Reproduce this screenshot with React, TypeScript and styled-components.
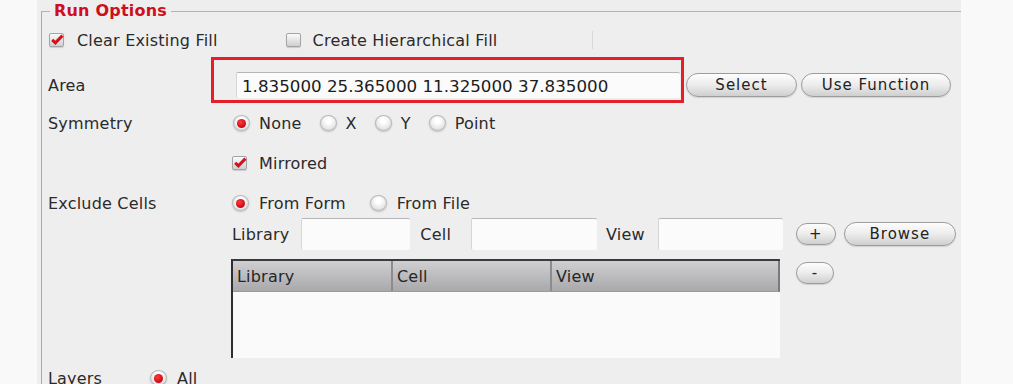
import * as React from "react";
import styled, { createGlobalStyle } from "styled-components";

const GlobalStyle = createGlobalStyle`
  html, body {
    margin: 0;
    padding: 0;
    background: #f9f9f9;
    overflow: hidden;
  }
  body {
    font-family: "DejaVu Sans", "Liberation Sans", sans-serif;
    font-size: 16px;
    letter-spacing: 0.2px;
    color: #2a2a2a;
  }
`;

const Page = styled.div`
  width: 1013px;
  height: 384px;
  overflow: hidden;
`;

const Panel = styled.div`
  margin-left: 37px;
  width: 924px;
  height: 400px;
  padding-top: 1px;
  background: #efeeef;
`;

const Frame = styled.fieldset`
  margin: 0 0 0 4px;
  padding: 0 0 0 6px;
  border: none;
  border-top: 1px solid #b3b2b6;
  border-left: 1px solid #a9a8ab;
  min-width: 0;
`;

const Legend = styled.legend`
  margin-left: 2px;
  padding: 0 4px;
  font-weight: bold;
  font-size: 16px;
  line-height: 20px;
  color: #cc1020;
`;

const Row = styled.div<{ $h: number; $mt: number }>`
  display: flex;
  align-items: center;
  height: ${(p) => p.$h}px;
  margin-top: ${(p) => p.$mt}px;
`;

const Label = styled.div<{ $w?: number }>`
  width: ${(p) => p.$w ?? 184}px;
  flex: none;
  white-space: nowrap;
`;

const Group = styled.div<{ $gap: number }>`
  display: flex;
  align-items: center;
  gap: ${(p) => p.$gap}px;
`;

const Option = styled.label<{ $ml?: number; $gap?: number }>`
  display: flex;
  align-items: center;
  gap: ${(p) => p.$gap ?? 10}px;
  margin-left: ${(p) => p.$ml ?? 0}px;
  white-space: nowrap;
`;

const Box = styled.span`
  position: relative;
  width: 15px;
  height: 14px;
  box-sizing: border-box;
  border: 1px solid #a4a4a6;
  border-radius: 2px;
  background: linear-gradient(#fbfbfb, #cfcfd1);
  box-shadow: 0 1px 1px rgba(0, 0, 0, 0.15);
  flex: none;
  svg {
    position: absolute;
    left: 0;
    top: -1px;
  }
`;

const Radio = styled.span<{ $on?: boolean }>`
  width: 17px;
  height: 16px;
  box-sizing: border-box;
  border-radius: 50%;
  border: 1px solid #b8b8ba;
  background: radial-gradient(circle at 50% 35%, #ffffff 20%, #d2d2d4 100%);
  box-shadow: 0 1px 2px rgba(0, 0, 0, 0.18);
  display: flex;
  align-items: center;
  justify-content: center;
  flex: none;
  &::after {
    content: "";
    display: ${(p) => (p.$on ? "block" : "none")};
    width: 9px;
    height: 9px;
    border-radius: 50%;
    background: radial-gradient(circle at 40% 35%, #ff3a3a, #c00010 80%);
  }
`;

const Divider = styled.div`
  width: 1px;
  height: 18px;
  margin-left: 95px;
  background: #d8d8da;
`;

const Field = styled.div<{ $w: number; $h: number; $ml?: number }>`
  position: relative;
  width: ${(p) => p.$w}px;
  height: ${(p) => p.$h}px;
  margin-left: ${(p) => p.$ml ?? 0}px;
  box-sizing: border-box;
  background: #fbfbfb;
  border-top: 1px solid #b6b6b8;
  border-left: 1px solid #d6d6d8;
  border-radius: 2px;
  flex: none;
  display: flex;
  align-items: center;
  padding-left: 5px;
  font-size: 16.7px;
  letter-spacing: 0;
  color: #1c1c1c;
  white-space: nowrap;
`;

const Highlight = styled.div`
  position: absolute;
  top: -16px;
  left: -26px;
  right: -4px;
  bottom: -5px;
  border: 3px solid #e41e2a;
  pointer-events: none;
`;

const Button = styled.button<{ $w: number; $h?: number; $ml?: number }>`
  width: ${(p) => p.$w}px;
  height: ${(p) => p.$h ?? 24}px;
  margin-left: ${(p) => p.$ml ?? 0}px;
  border: 1px solid #9c9c9e;
  border-radius: 12px;
  background: linear-gradient(#fdfdfd 0%, #ececec 50%, #cfcfd1 100%);
  box-shadow: 0 1px 1px rgba(0, 0, 0, 0.12);
  font-family: inherit;
  font-size: 15px;
  letter-spacing: 1px;
  color: #222;
  padding: 0;
  flex: none;
`;

const Text = styled.span<{ $ml?: number }>`
  margin-left: ${(p) => p.$ml ?? 0}px;
  white-space: nowrap;
  flex: none;
`;

const Side = styled.div`
  display: flex;
  flex-direction: column;
  margin-left: 16px;
  padding-top: 3px;
`;

const Table = styled.div`
  width: 549px;
  height: 99px;
  box-sizing: border-box;
  border-top: 2px solid #3a3a3c;
  border-left: 2px solid #2e2e30;
  background: #fafafa;
  display: flex;
  flex-direction: column;
  margin-left: 183px;
`;

const Header = styled.div`
  display: grid;
  grid-template-columns: 158px 159px 1fr;
  height: 30px;
  background: linear-gradient(#cfcfd1, #a9a9ab);
  border-right: 2px solid #7a7a7c;
  border-bottom: 1px solid #9a9a9c;
`;

const HeadCell = styled.div<{ $first?: boolean }>`
  display: flex;
  align-items: center;
  padding-left: 4px;
  border-left: ${(p) => (p.$first ? "none" : "2px solid #8c8c8e")};
  color: #262626;
`;

const TableRow = styled.div`
  display: flex;
  align-items: flex-start;
  margin-top: 9px;
`;

function Check() {
  return (
    <Box>
      <svg width="14" height="13" viewBox="0 0 14 13">
        <path d="M2.2 6.8 L5.4 9.8 L12.4 2.6" fill="none" stroke="#d3101c" strokeWidth="3" />
      </svg>
    </Box>
  );
}

export default function App() {
  return (
    <Page>
      <GlobalStyle />
      <Panel>
        <Frame>
          <Legend>Run Options</Legend>

          <Row $h={20} $mt={9}>
            <Option $ml={1} $gap={13}>
              <Check />
              Clear Existing Fill
            </Option>
            <Option $ml={68} $gap={12}>
              <Box />
              Create Hierarchical Fill
            </Option>
            <Divider />
          </Row>

          <Row $h={26} $mt={22}>
            <Label>Area</Label>
            <Field $w={444} $h={26} $ml={4}>
              1.835000 25.365000 11.325000 37.835000
              <Highlight />
            </Field>
            <Button $w={111} $ml={6}>Select</Button>
            <Button $w={150} $ml={4}>Use Function</Button>
          </Row>

          <Row $h={26} $mt={12}>
            <Label>Symmetry</Label>
            <Group $gap={18}>
              <Option $ml={1} $gap={9}>
                <Radio $on />
                None
              </Option>
              <Option $gap={9}>
                <Radio />X
              </Option>
              <Option $gap={9}>
                <Radio />Y
              </Option>
              <Option $gap={9}>
                <Radio />
                Point
              </Option>
            </Group>
          </Row>

          <Row $h={26} $mt={14}>
            <Label />
            <Option $gap={12}>
              <Check />
              Mirrored
            </Option>
          </Row>

          <Row $h={26} $mt={14}>
            <Label>Exclude Cells</Label>
            <Group $gap={24}>
              <Option $gap={10}>
                <Radio $on />
                From Form
              </Option>
              <Option $gap={10}>
                <Radio />
                From File
              </Option>
            </Group>
          </Row>

          <Row $h={32} $mt={2}>
            <Label />
            <Text>Library</Text>
            <Field $w={109} $h={32} $ml={12} />
            <Text $ml={10}>Cell</Text>
            <Field $w={126} $h={32} $ml={20} />
            <Text $ml={9}>View</Text>
            <Field $w={125} $h={32} $ml={13} />
            <Button $w={40} $h={22} $ml={13}>+</Button>
            <Button $w={112} $ml={8}>Browse</Button>
          </Row>

          <TableRow>
            <Table>
              <Header>
                <HeadCell $first>Library</HeadCell>
                <HeadCell>Cell</HeadCell>
                <HeadCell>View</HeadCell>
              </Header>
            </Table>
            <Side>
              <Button $w={38} $h={22}>-</Button>
            </Side>
          </TableRow>

          <Row $h={24} $mt={8}>
            <Label $w={102}>Layers</Label>
            <Option>
              <Radio $on />
              All
            </Option>
          </Row>
        </Frame>
      </Panel>
    </Page>
  );
}
